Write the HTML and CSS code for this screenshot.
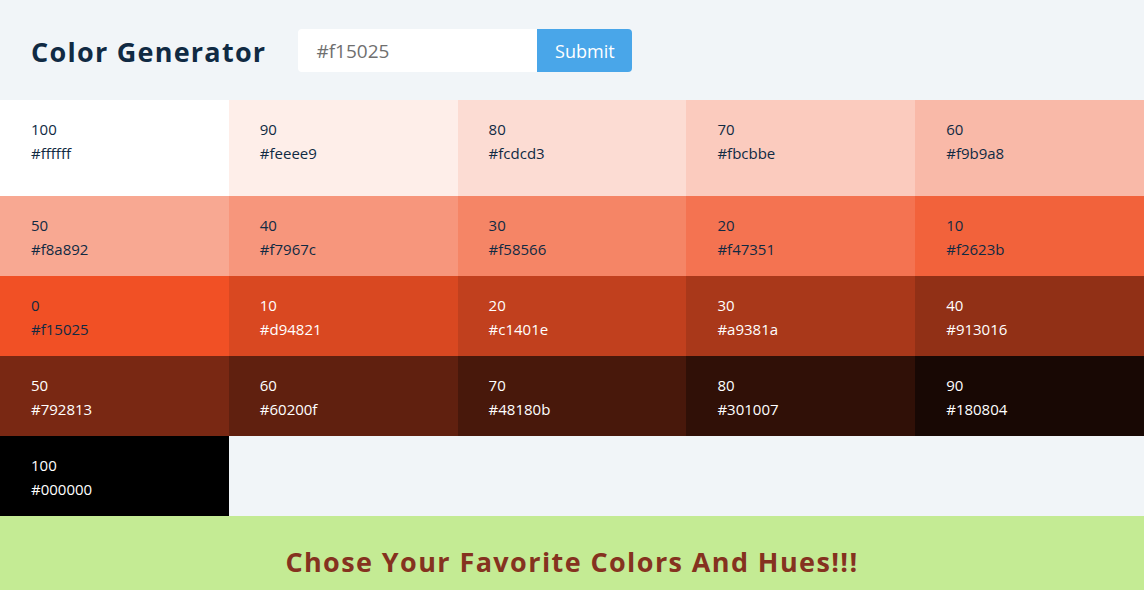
FILE: index.html
```html
<!DOCTYPE html>
<html lang="en">
<head>
<meta charset="utf-8">
<title>Color Generator</title>
<link rel="stylesheet" href="styles.css">
</head>
<body>
<section class="container">
  <h3 class="title">Color Generator</h3>
  <form class="form">
    <input class="form-input" type="text" value="#f15025">
    <button class="btn" type="button">Submit</button>
  </form>
</section>
<section class="colors">
  <article class="color" style="background:#ffffff"><p>100</p><p>#ffffff</p></article>
  <article class="color" style="background:#feeee9"><p>90</p><p>#feeee9</p></article>
  <article class="color" style="background:#fcdcd3"><p>80</p><p>#fcdcd3</p></article>
  <article class="color" style="background:#fbcbbe"><p>70</p><p>#fbcbbe</p></article>
  <article class="color" style="background:#f9b9a8"><p>60</p><p>#f9b9a8</p></article>
  <article class="color" style="background:#f8a892"><p>50</p><p>#f8a892</p></article>
  <article class="color" style="background:#f7967c"><p>40</p><p>#f7967c</p></article>
  <article class="color" style="background:#f58566"><p>30</p><p>#f58566</p></article>
  <article class="color" style="background:#f47351"><p>20</p><p>#f47351</p></article>
  <article class="color" style="background:#f2623b"><p>10</p><p>#f2623b</p></article>
  <article class="color" style="background:#f15025"><p>0</p><p>#f15025</p></article>
  <article class="color color-light" style="background:#d94821"><p>10</p><p>#d94821</p></article>
  <article class="color color-light" style="background:#c1401e"><p>20</p><p>#c1401e</p></article>
  <article class="color color-light" style="background:#a9381a"><p>30</p><p>#a9381a</p></article>
  <article class="color color-light" style="background:#913016"><p>40</p><p>#913016</p></article>
  <article class="color color-light" style="background:#792813"><p>50</p><p>#792813</p></article>
  <article class="color color-light" style="background:#60200f"><p>60</p><p>#60200f</p></article>
  <article class="color color-light" style="background:#48180b"><p>70</p><p>#48180b</p></article>
  <article class="color color-light" style="background:#301007"><p>80</p><p>#301007</p></article>
  <article class="color color-light" style="background:#180804"><p>90</p><p>#180804</p></article>
  <article class="color color-light" style="background:#000000"><p>100</p><p>#000000</p></article>
</section>
<footer class="footer">
  <h2 class="footer-text">Chose Your Favorite Colors And Hues!!!</h2>
</footer>
</body>
</html>
```
FILE: styles.css
```css
* {
  margin: 0;
  padding: 0;
  box-sizing: border-box;
}

body {
  background: #f1f5f8;
  color: #102a43;
  font-family: "Open Sans", "Noto Sans", sans-serif;
  width: 1144px;
  overflow: hidden;
}

.container {
  height: 100px;
  display: flex;
  align-items: center;
  padding-left: 31px;
  gap: 32px;
}

.title {
  font-size: 27px;
  font-weight: 700;
  letter-spacing: 1.25px;
  color: #102a43;
  line-height: 1;
  margin-top: 3px;
}

.form {
  display: flex;
  height: 43px;
  margin-top: 1px;
}

.form-input {
  width: 239px;
  height: 43px;
  border: none;
  border-radius: 4px 0 0 4px;
  background: #ffffff;
  padding: 0 18px;
  font-family: inherit;
  font-size: 19px;
  color: #6f6f6f;
  outline: none;
}

.btn {
  width: 95px;
  height: 43px;
  border: none;
  border-radius: 0 4px 4px 0;
  background: #49a6e9;
  color: #ffffff;
  font-family: inherit;
  font-size: 18px;
}

.colors {
  display: grid;
  grid-template-columns: repeat(5, 1fr);
  grid-template-rows: 96px;
  grid-auto-rows: 80px;
}

.color {
  padding: 17px 31px 0;
  font-size: 15px;
  line-height: 24px;
  color: #102a43;
}

.color-light {
  color: #ffffff;
}

.footer {
  height: 74px;
  background: #c4eb94;
  display: flex;
  align-items: center;
  justify-content: center;
}

.footer-text {
  font-size: 27px;
  font-weight: 700;
  letter-spacing: 1.4px;
  color: #85321f;
  margin-top: 16px;
}
```
